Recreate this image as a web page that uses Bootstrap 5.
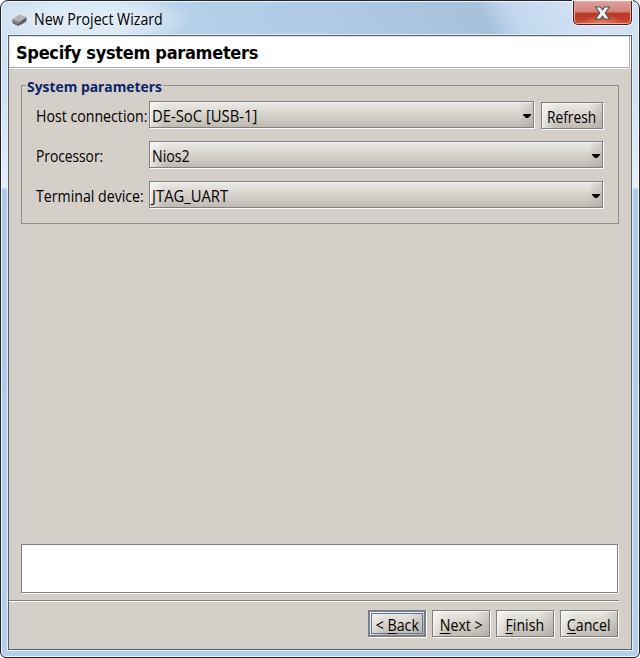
<!DOCTYPE html>
<html lang="en">
<head>
<meta charset="utf-8">
<title>New Project Wizard</title>
<link href="https://cdn.jsdelivr.net/npm/bootstrap@5.3.0/dist/css/bootstrap.min.css" rel="stylesheet">
<style>
body{width:640px;height:658px;margin:0;overflow:hidden;background:#fff;font-family:"Open Sans","Noto Sans",sans-serif;font-size:16px;line-height:20px;color:#000}
.window-frame{width:640px;height:658px;border:1px solid #23242d;border-radius:8px 8px 6px 6px;box-shadow:inset 0 0 0 1px #eef6fe;padding:0 7px 7px;
background:linear-gradient(180deg,#d3e2f3 36px,#cfe0f2 90px,#e6eff8 187px,#aecae6 188px,#b4cfea 640px)}
.title-strip{height:33px;margin:1px -6px 0;padding-left:9px;border-radius:6px 6px 0 0;
background:radial-gradient(ellipse 105px 30px at 88px 17px,#e6f0faee 0,#e2edf8cc 55%,#dceaf700 100%),linear-gradient(60deg,#d2e1f2 0,#b9d2eb 18%,#b2cfea 35%,#aecae6 52%,#a6c1dc 75%,#c3d8ef 80%,#d3e2f3 92%,#cfe0f2 100%)}
.title-text{margin-left:6px}
.fit{display:inline-block;white-space:nowrap;transform:scaleX(.885);transform-origin:0 50%}
.fit-wide{transform:scaleX(.925)}
.fit-slim{transform:scaleX(.86)}
.push .fit{transform-origin:50% 50%;margin:0 -8px}
.close-btn{width:59px;height:24px;margin-right:6px;margin-top:-1px;border:1px solid #4c1a1c;border-top:0;border-radius:0 0 5px 5px;box-shadow:inset 0 0 0 1px #eaa79e,0 0 0 1px #ebf4fc;
background:radial-gradient(ellipse 22px 9px at 50% 100%,#e48263 0,#e4826300 100%),linear-gradient(#dca09c 0,#d4817a 11px,#b8382a 12px,#c33d29 18px,#cf5b42 24px)}
.client{height:615px;border:1px solid #57636f;box-shadow:0 0 0 1px #e4f0fb;background:#d4cfc8}
.page-head{height:33px;background:#fff;box-shadow:inset -1px -1px 0 #fff,inset -2px -2px 0 #aaa,inset 1px 1px 0 #dedede;padding-left:7px;font-family:"DejaVu Sans Condensed","DejaVu Sans",sans-serif;font-stretch:condensed;font-size:18px;font-weight:700;line-height:34px;letter-spacing:-.29px}
.params{height:139px;margin:16px 12px 0;border:1px solid #8f8d87;padding:15px 15px 0 14px}
.group-title{height:20px;width:137px;margin:-25px 0 5px -10px;padding-left:1px;background:#d4cfc8;color:#0a246a;font-weight:700;font-size:15px}
.line{height:27px;margin-bottom:13px}
.caption{width:113px;padding-top:5px;flex:none}
.combo,.push{height:27px;border:1px solid #7f7f7f;box-shadow:1px 1px 0 #fff,inset 1px 1px 0 #fff8;background:linear-gradient(90deg,#fff9 0,#fff0 14px),linear-gradient(270deg,#8f8c874d 0,#8f8c8700 14px),linear-gradient(#edebe8,#d4d0c9 55%,#bfbab1)}
.combo{padding:4px 2px 0 2px}
.combo svg{width:8px;height:4px;margin-top:8px;flex:none}
.push{width:58px;text-align:center;padding:4px 0 0;white-space:nowrap;flex:none}
.refresh{width:62px;margin-left:7px;margin-top:1px}
.gap-fill{height:320px}
.message-box{height:49px;margin:0 13px 0 12px;border:1px solid #7f7f7f;background:#fff;box-shadow:1px 1px 0 #fff}
.rule-line{margin:7px 12px 0 0;height:2px;background:#fff;border-top:1px solid #7f7f7f}
.actions{gap:6px;padding:8px 13px 0}
.default-btn{border-width:2px;padding-top:3px;outline:1px solid #5475ae;outline-offset:-4px}
u{text-underline-offset:2px;text-decoration-thickness:1px}
</style>
<script src="https://cdn.jsdelivr.net/npm/bootstrap@5.3.0/dist/js/bootstrap.bundle.min.js"></script>
</head>
<body>
<div class="window-frame">
  <div class="title-strip d-flex">
    <svg class="mt-2" width="17" height="18" viewBox="0 0 17 18"><path d="M1.500 9.500v3l5.500 3.500 8.500-5V7L8 12z" fill="#5d5d5d"/><path d="M1.500 9 8.500 4.500l7 2.300L8 12z" fill="#b5b5b5"/><path d="M1.500 9v2.500L7 14.500l1-2.500z" fill="#858585"/><path d="M2.500 12v2m2-1v2m2.500-1v2m3-3v2m2-3v2m2-3v2" stroke="#666"/></svg>
    <div class="title-text flex-grow-1 d-flex align-items-center"><span class="fit">New Project Wizard</span></div>
    <div class="close-btn d-flex justify-content-center"><svg width="17" height="22" viewBox="0 0 17 22"><path d="M1.500 6h4.900L8.500 9l2.100-3h4.900l-4.300 6 4.300 6h-4.900l-2.100-3-2.100 3H1.500l4.300-6z" fill="#f3f3f3" stroke="#50535f" stroke-width="1.200" stroke-linejoin="round"/></svg></div>
  </div>
  <main class="client">
    <div class="page-head"><span>Specify system parameters</span></div>
    <section class="params">
      <div class="group-title"><span class="fit fit-wide">System parameters</span></div>
      <div class="line d-flex"><div class="caption"><span class="fit">Host connection:</span></div><div class="combo flex-grow-1 d-flex justify-content-between"><span class="fit fit-wide">DE-SoC [USB-1]</span><svg viewBox="0 0 8 4"><path d="M0 0h8v1L5 4H3L0 1z"/></svg></div><div class="push refresh"><span class="fit fit-slim">Refresh</span></div></div>
      <div class="line d-flex"><div class="caption"><span class="fit fit-slim">Processor:</span></div><div class="combo flex-grow-1 d-flex justify-content-between"><span class="fit">Nios2</span><svg viewBox="0 0 8 4"><path d="M0 0h8v1L5 4H3L0 1z"/></svg></div></div>
      <div class="line d-flex"><div class="caption"><span class="fit">Terminal device:</span></div><div class="combo flex-grow-1 d-flex justify-content-between"><span class="fit fit-wide">JTAG_UART</span><svg viewBox="0 0 8 4"><path d="M0 0h8v1L5 4H3L0 1z"/></svg></div></div>
    </section>
    <div class="gap-fill"></div>
    <div class="message-box"></div>
    <div class="rule-line"></div>
    <div class="actions d-flex justify-content-end">
      <div class="push default-btn"><span class="fit">&lt; <u>B</u>ack</span></div>
      <div class="push"><span class="fit"><u>N</u>ext &gt;</span></div>
      <div class="push"><span class="fit"><u>F</u>inish</span></div>
      <div class="push"><span class="fit"><u>C</u>ancel</span></div>
    </div>
  </main>
</div>
</body>
</html>
